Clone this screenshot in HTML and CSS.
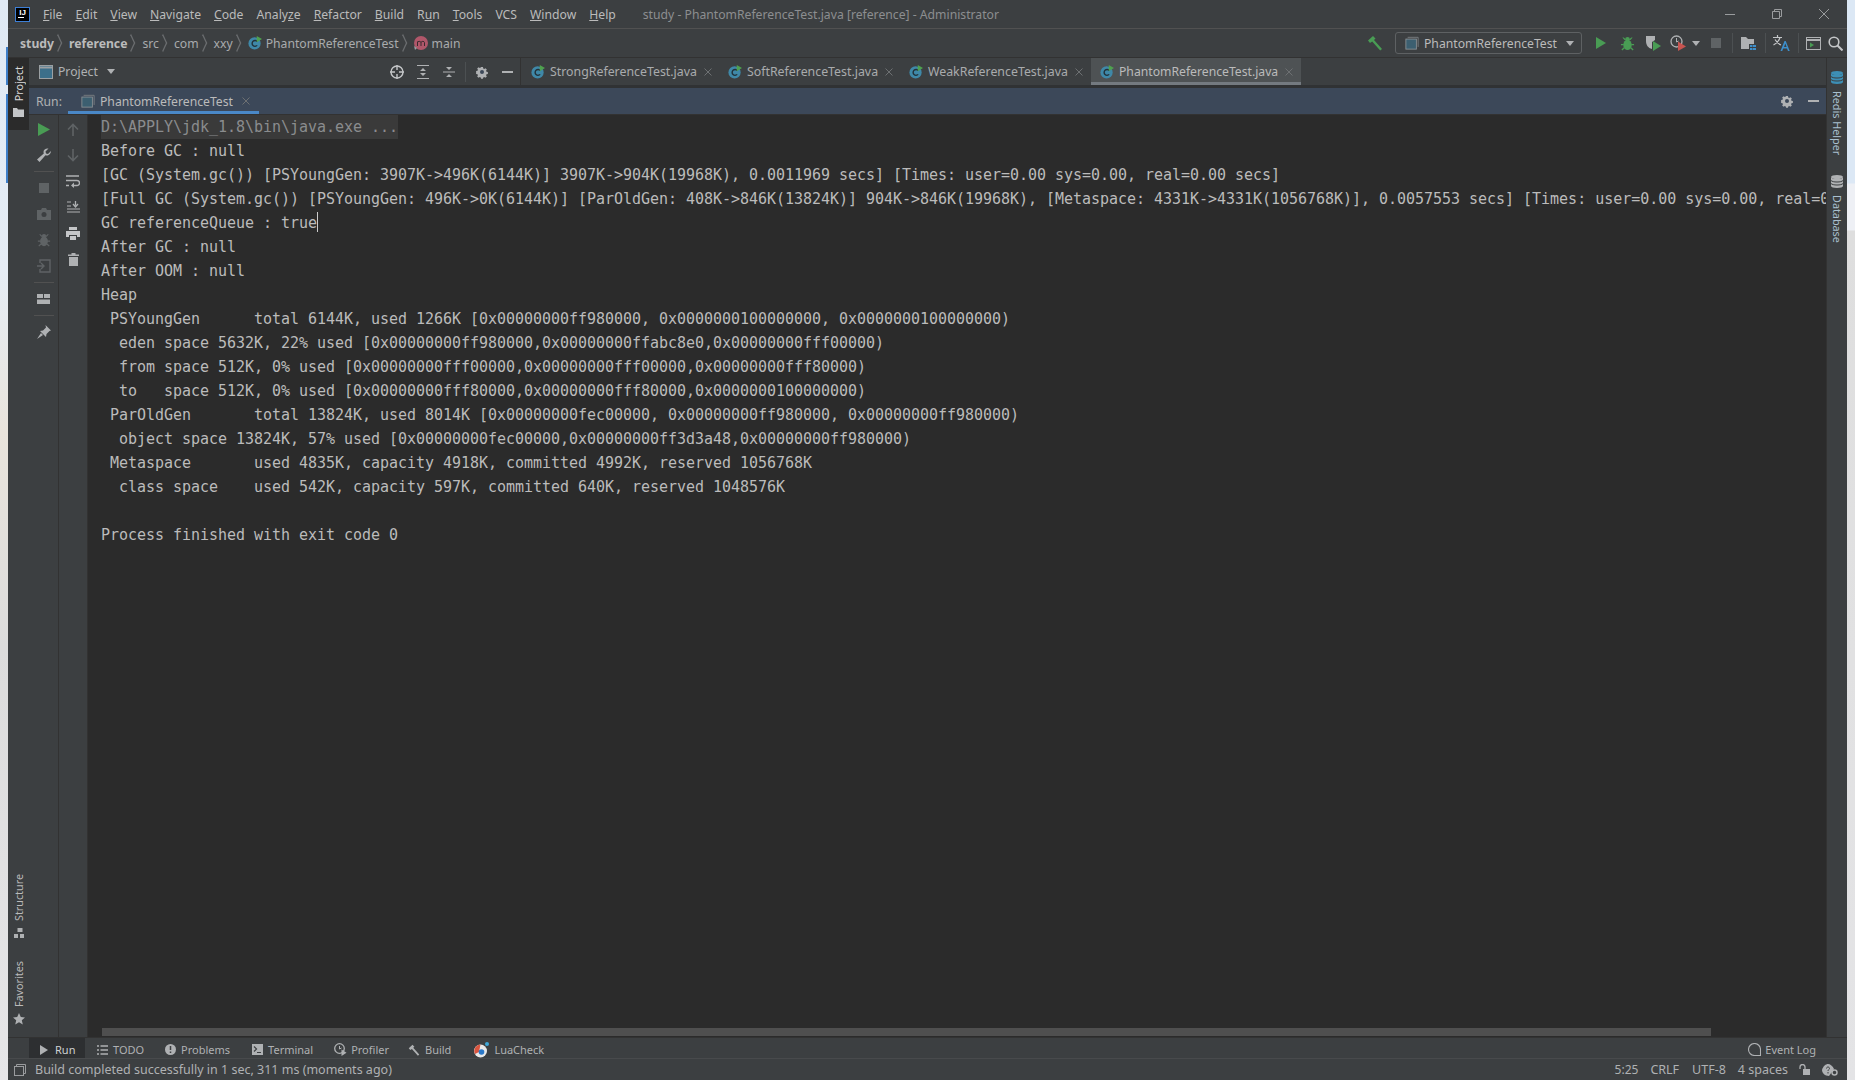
FILE: index.html
```html
<!DOCTYPE html>
<html lang="en">
<head>
    <meta charset="UTF-8">
    <meta name="viewport" content="width=device-width, initial-scale=1.0">
    <title>study - PhantomReferenceTest.java [reference] - Administrator</title>
    <link rel="stylesheet" href="styles.css">
</head>
<body>
    <!-- shared icons -->
    <svg class="sprite" xmlns="http://www.w3.org/2000/svg">
        <symbol id="i-class" viewBox="0 0 16 16">
            <circle cx="7.5" cy="8.5" r="7" fill="#3f88a8"/>
            <path d="M10.500 6.300A3.300 3.300 0 1 0 10.500 10.700" fill="none" stroke="#22323a" stroke-width="1.600"/>
            <path d="M10 0l6 3.5L10 7z" fill="#4fa14f"/>
        </symbol>
        <symbol id="i-panel" viewBox="0 0 16 16">
            <path d="M3 1.5h12v11" fill="none" stroke="#7b8083"/>
            <rect x="1" y="3.5" width="12" height="11.5" fill="#3c5f70" stroke="#8a9094"/>
        </symbol>
        <symbol id="i-gear" viewBox="0 0 16 16">
            <path d="M6.6 1h2.8l.4 2 1.4.6 1.7-1.1 2 2-1.1 1.7.6 1.4 2 .4v2.8l-2 .4-.6 1.4 1.1 1.7-2 2-1.7-1.1-1.4.6-.4 2H6.6l-.4-2-1.4-.6-1.7 1.1-2-2 1.1-1.7-.6-1.4-2-.4V6.600l2-.4.6-1.400-1.100-1.700 2-2 1.700 1.100 1.400-.6z" transform="translate(1.600 1.600) scale(.8)" fill="#afb1b3"/>
            <circle cx="8" cy="8" r="2.300" fill="#3c4859"/>
        </symbol>
        <symbol id="i-hammer" viewBox="0 0 16 16">
            <path d="M1 5.500L6 1l2.500 2.500-1.500 1.500 8 9-1.800 1.600-8-9L3 8z" fill="currentColor"/>
        </symbol>
        <symbol id="i-bug" viewBox="0 0 16 16">
            <g fill="currentColor">
                <ellipse cx="8" cy="9.500" rx="4.500" ry="5.500"/>
                <circle cx="8" cy="3.500" r="2.500"/>
                <path d="M2.500 1.500h1.500l2 2-1 1zM13.500 1.500H12l-2 2 1 1zM1 8.500h3v1.400H1zM12 8.500h3v1.400h-3zM1.500 14.500L4 12l1 1-2.500 2.500zM14.500 14.500L12 12l-1 1 2.500 2.500z"/>
            </g>
        </symbol>
        <symbol id="i-close" viewBox="0 0 8 8">
            <path d="M.5.5l7 7M7.500.5l-7 7" stroke="#6d7072" fill="none"/>
        </symbol>
    </svg>

    <div class="desktop">
        <div class="edge edge-left">
            <span class="edge-blue edge-blue-a"></span>
            <span class="edge-blue edge-blue-b"></span>
        </div>

        <div class="window">
            <header class="titlebar">
                <div class="app-logo">IJ</div>
                <nav class="menu">
                    <span><u>F</u>ile</span>
                    <span><u>E</u>dit</span>
                    <span><u>V</u>iew</span>
                    <span><u>N</u>avigate</span>
                    <span><u>C</u>ode</span>
                    <span>Analy<u>z</u>e</span>
                    <span><u>R</u>efactor</span>
                    <span><u>B</u>uild</span>
                    <span>R<u>u</u>n</span>
                    <span><u>T</u>ools</span>
                    <span>VCS</span>
                    <span><u>W</u>indow</span>
                    <span><u>H</u>elp</span>
                </nav>
                <div class="window-title">study - PhantomReferenceTest.java [reference] - Administrator</div>
                <div class="window-controls">
                    <svg width="10" height="10" viewBox="0 0 10 10"><path d="M0 5.500h10" stroke="#9a9c9e"/></svg>
                    <svg width="10" height="10" viewBox="0 0 10 10"><path d="M.5 2.500h7v7h-7zM2.500 2.500v-2h7v7h-2" fill="none" stroke="#9a9c9e"/></svg>
                    <svg width="10" height="10" viewBox="0 0 10 10"><path d="M0 0l10 10M10 0L0 10" stroke="#9a9c9e"/></svg>
                </div>
            </header>

            <div class="navbar">
                <div class="crumbs">
                    <b>study</b><i class="chev"></i>
                    <b>reference</b><i class="chev"></i>
                    <span>src</span><i class="chev"></i>
                    <span>com</span><i class="chev"></i>
                    <span>xxy</span><i class="chev"></i>
                    <svg class="ico14"><use href="#i-class"/></svg>
                    <span class="crumb-class">PhantomReferenceTest</span><i class="chev"></i>
                    <svg class="ico14" viewBox="0 0 14 14">
                        <circle cx="7" cy="7" r="7" fill="#b0576a"/>
                        <path d="M3.500 10V5.500M3.500 6.500c0-1.500 3.500-1.500 3.500 0V10M7 6.500c0-1.500 3.500-1.500 3.500 0V10" fill="none" stroke="#3a2a2e"/>
                        <path d="M0 10l3 2-2 2z" fill="#9aa0a3"/>
                    </svg>
                    <span class="crumb-class">main</span>
                </div>
                <div class="actions">
                    <svg class="hammer" width="16" height="16"><use href="#i-hammer"/></svg>
                    <div class="run-combo">
                        <svg class="ico14"><use href="#i-panel"/></svg>
                        <span>PhantomReferenceTest</span>
                        <i class="caret-down"></i>
                    </div>
                    <svg class="act-run" width="12" height="14" viewBox="0 0 12 14"><path d="M1 1l10 6-10 6z" fill="#499c54"/></svg>
                    <svg class="act-bug" width="15" height="15"><use href="#i-bug"/></svg>
                    <svg class="act-cov" width="16" height="16" viewBox="0 0 16 16">
                        <path d="M1 1h9v4l-3 2v7C3 13 1 10 1 6z" fill="#afb1b3"/>
                        <path d="M8 6l8 5-8 5z" fill="#499c54"/>
                    </svg>
                    <svg class="act-prof" width="16" height="16" viewBox="0 0 16 16">
                        <circle cx="6.500" cy="6.500" r="5.500" fill="none" stroke="#afb1b3" stroke-width="1.300"/>
                        <path d="M6.500 3v4l2-1" fill="none" stroke="#afb1b3"/>
                        <path d="M8 6.500l8 5-8 4.500z" fill="#c75450"/>
                    </svg>
                    <i class="caret-down act-caret"></i>
                    <span class="act-stop"></span>
                    <i class="act-sep"></i>
                    <svg class="act-folder" width="15" height="14" viewBox="0 0 15 14">
                        <path d="M0 1h5l2 2h6v5H8v5H0z" fill="#afb1b3"/>
                        <path d="M9 9h2.500v2H9zM12 9h3v2h-3zM9 12h2.500v2H9zM12 12h3v2h-3z" fill="#3d8fcb"/>
                    </svg>
                    <i class="act-sep"></i>
                    <svg class="act-trans" width="17" height="16" viewBox="0 0 17 16">
                        <path d="M0 2.500h9M4.500 0v2.500M7 2.500C6 6 3.500 8.500.5 10M2 4.500C3.500 7 5.500 9 8 10" fill="none" stroke="#c4c6c8" stroke-width="1.200"/>
                        <path d="M7.500 16l4-10h1.200l4 10h-1.700l-1-2.600h-3.800l-1 2.600zM11 12h2.600l-1.300-3.500z" fill="#3d8fcb"/>
                    </svg>
                    <i class="act-sep"></i>
                    <svg class="act-win" width="15" height="13" viewBox="0 0 15 13">
                        <rect x=".5" y=".5" width="14" height="12" fill="none" stroke="#afb1b3"/>
                        <path d="M.5 3h14" stroke="#afb1b3" stroke-width="2"/>
                        <path d="M4 5.500l4 2.500-4 2.500z" fill="#499c54"/>
                    </svg>
                    <svg class="act-search" width="15" height="15" viewBox="0 0 15 15">
                        <circle cx="6" cy="6" r="4.800" fill="none" stroke="#c4c6c8" stroke-width="1.600"/>
                        <path d="M9.500 9.500l5 5" stroke="#c4c6c8" stroke-width="2"/>
                    </svg>
                </div>
            </div>

            <div class="workspace">
                <aside class="strip strip-left">
                    <div class="strip-btn strip-active">
                        <span class="vtext">Project</span>
                        <svg width="11" height="9" viewBox="0 0 11 9"><path d="M0 0h4l1 1.500h6V9H0z" fill="#c4c6c8"/></svg>
                    </div>
                    <div class="strip-bottom">
                        <div class="strip-btn">
                            <span class="vtext">Structure</span>
                            <svg width="10" height="10" viewBox="0 0 10 10"><path d="M3.500 0h5v4h-5zM0 6h4v4H0zM6 6h4v4H6z" fill="#afb1b3"/></svg>
                        </div>
                        <div class="strip-btn strip-fav">
                            <span class="vtext">Favorites</span>
                            <svg width="12" height="12" viewBox="0 0 12 12"><path d="M6 0l1.800 4 4.200.4-3.200 2.800 1 4.300L6 9.200l-3.800 2.300 1-4.300L0 4.400 4.200 4z" fill="#afb1b3"/></svg>
                        </div>
                    </div>
                </aside>

                <main class="center">
                    <div class="tabs-row">
                        <div class="project-head">
                            <svg class="ico14" viewBox="0 0 14 14"><rect x=".5" y=".5" width="13" height="13" fill="#3c6f8a" stroke="#9ba0a3"/><path d="M.5 2.500h13" stroke="#9ba0a3" stroke-width="2"/></svg>
                            <span class="project-label">Project</span>
                            <i class="caret-down"></i>
                            <svg class="head-target" width="14" height="14" viewBox="0 0 14 14">
                                <circle cx="7" cy="7" r="6" fill="none" stroke="#c4c6c8" stroke-width="1.400"/>
                                <path d="M7 0v5M7 9v5M0 7h5M9 7h5" stroke="#c4c6c8" stroke-width="1.400"/>
                            </svg>
                            <svg class="head-expand" width="12" height="14" viewBox="0 0 12 14">
                                <path d="M0 .5h12M0 13.500h12" stroke="#afb1b3"/>
                                <path d="M6 3L3 6h6zM6 11L3 8h6z" fill="#afb1b3"/>
                            </svg>
                            <svg class="head-collapse" width="12" height="14" viewBox="0 0 12 14">
                                <path d="M0 7h12" stroke="#afb1b3"/>
                                <path d="M6 5L3 2h6zM6 9l-3 3h6z" fill="#afb1b3"/>
                            </svg>
                            <i class="head-sep"></i>
                            <svg class="head-gear" width="14" height="14"><use href="#i-gear"/></svg>
                            <i class="head-minus"></i>
                        </div>
                        <div class="tab tab-strong">
                            <svg class="ico14"><use href="#i-class"/></svg>
                            <span>StrongReferenceTest.java</span>
                            <svg class="close" width="8" height="8"><use href="#i-close"/></svg>
                        </div>
                        <div class="tab tab-soft">
                            <svg class="ico14"><use href="#i-class"/></svg>
                            <span>SoftReferenceTest.java</span>
                            <svg class="close" width="8" height="8"><use href="#i-close"/></svg>
                        </div>
                        <div class="tab tab-weak">
                            <svg class="ico14"><use href="#i-class"/></svg>
                            <span>WeakReferenceTest.java</span>
                            <svg class="close" width="8" height="8"><use href="#i-close"/></svg>
                        </div>
                        <div class="tab tab-active">
                            <svg class="ico14"><use href="#i-class"/></svg>
                            <span>PhantomReferenceTest.java</span>
                            <svg class="close" width="8" height="8"><use href="#i-close"/></svg>
                        </div>
                    </div>

                    <div class="run-head">
                        <span class="run-label">Run:</span>
                        <div class="run-tab">
                            <svg class="ico14"><use href="#i-panel"/></svg>
                            <span>PhantomReferenceTest</span>
                            <svg class="close" width="8" height="8"><use href="#i-close"/></svg>
                        </div>
                        <div class="run-head-right">
                            <svg width="14" height="14"><use href="#i-gear"/></svg>
                            <i class="head-minus"></i>
                        </div>
                    </div>

                    <div class="run-body">
                        <div class="run-tools run-tools-main">
                            <div class="tool"><svg width="12" height="13" viewBox="0 0 12 13"><path d="M0 0l12 6.500L0 13z" fill="#499c54"/></svg></div>
                            <div class="tool"><svg width="14" height="14" viewBox="0 0 14 14"><path d="M14 3l-3 3-2-.5-.5-2 3-3C9 0 6.500 1.500 6.500 4c0 .7.1 1 .3 1.500L0 11.500 2.500 14l6-6.800c.5.200 1 .3 1.500.3 2.500 0 4-2.500 4-4.500z" fill="#afb1b3"/></svg></div>
                            <i class="tool-sep"></i>
                            <div class="tool"><span class="tool-stop"></span></div>
                            <div class="tool"><svg width="14" height="12" viewBox="0 0 14 12"><path d="M0 2h4l1-2h4l1 2h4v10H0z" fill="#5f6365"/><circle cx="7" cy="6.500" r="2.500" fill="#3c3f41"/></svg></div>
                            <div class="tool dim-bug"><svg width="14" height="14"><use href="#i-bug"/></svg></div>
                            <div class="tool"><svg width="14" height="14" viewBox="0 0 14 14"><path d="M3 4V1h10v12H3v-3" fill="none" stroke="#5f6365" stroke-width="1.400"/><path d="M0 7h6M4 4l3 3-3 3" fill="none" stroke="#5f6365" stroke-width="1.400"/></svg></div>
                            <i class="tool-sep"></i>
                            <div class="tool"><svg width="13" height="10" viewBox="0 0 13 10"><path d="M0 0h6v4H0zM7 0h6v4H7zM0 5.500h13V10H0z" fill="#afb1b3"/></svg></div>
                            <i class="tool-sep"></i>
                            <div class="tool"><svg width="14" height="14" viewBox="0 0 14 14"><path d="M8.500 0L14 5.500l-1.500.5-3 3-.5 3-6-6 3-.5 3-3zM4 8l2 2-6 4z" fill="#afb1b3"/></svg></div>
                        </div>
                        <div class="run-tools">
                            <div class="tool"><svg width="12" height="13" viewBox="0 0 12 13"><path d="M6 13V2M1 6.500L6 1.500l5 5" fill="none" stroke="#5f6365" stroke-width="1.600"/></svg></div>
                            <div class="tool"><svg width="12" height="13" viewBox="0 0 12 13"><path d="M6 0v11M1 6.500l5 5 5-5" fill="none" stroke="#5f6365" stroke-width="1.600"/></svg></div>
                            <div class="tool"><svg width="14" height="13" viewBox="0 0 14 13"><path d="M0 1h13M0 5.500h11a2.500 2.500 0 0 1 0 5H6M0 10.500h3" fill="none" stroke="#afb1b3" stroke-width="1.400"/><path d="M8 7.500l-3 3 3 2.500z" fill="#afb1b3"/></svg></div>
                            <div class="tool"><svg width="13" height="12" viewBox="0 0 13 12"><path d="M0 1h4M0 5h4M0 8h13M0 11h13" stroke="#afb1b3" stroke-width="1.200"/><path d="M8.500 0v4.500M6 3l2.500 3L11 3" fill="none" stroke="#afb1b3" stroke-width="1.300"/></svg></div>
                            <div class="tool"><svg width="14" height="13" viewBox="0 0 14 13"><path d="M3 0h8v3H3zM0 4h14v6h-3V8H3v2H0zM4 9h6v4H4z" fill="#c4c6c8"/></svg></div>
                            <div class="tool"><svg width="11" height="13" viewBox="0 0 11 13"><path d="M3.500 0h4v1.500H11V3H0V1.500h3.500zM1 4h9v9H1z" fill="#afb1b3"/></svg></div>
                        </div>
                        <div class="console">
                            <pre class="output"><span class="cmd-line">D:\APPLY\jdk_1.8\bin\java.exe ...</span>
Before GC : null
[GC (System.gc()) [PSYoungGen: 3907K-&gt;496K(6144K)] 3907K-&gt;904K(19968K), 0.0011969 secs] [Times: user=0.00 sys=0.00, real=0.00 secs] 
[Full GC (System.gc()) [PSYoungGen: 496K-&gt;0K(6144K)] [ParOldGen: 408K-&gt;846K(13824K)] 904K-&gt;846K(19968K), [Metaspace: 4331K-&gt;4331K(1056768K)], 0.0057553 secs] [Times: user=0.00 sys=0.00, real=0.01 secs] 
GC referenceQueue : true<span class="text-caret"></span>
After GC : null
After OOM : null
Heap
 PSYoungGen      total 6144K, used 1266K [0x00000000ff980000, 0x0000000100000000, 0x0000000100000000)
  eden space 5632K, 22% used [0x00000000ff980000,0x00000000ffabc8e0,0x00000000fff00000)
  from space 512K, 0% used [0x00000000fff00000,0x00000000fff00000,0x00000000fff80000)
  to   space 512K, 0% used [0x00000000fff80000,0x00000000fff80000,0x0000000100000000)
 ParOldGen       total 13824K, used 8014K [0x00000000fec00000, 0x00000000ff980000, 0x00000000ff980000)
  object space 13824K, 57% used [0x00000000fec00000,0x00000000ff3d3a48,0x00000000ff980000)
 Metaspace       used 4835K, capacity 4918K, committed 4992K, reserved 1056768K
  class space    used 542K, capacity 597K, committed 640K, reserved 1048576K

Process finished with exit code 0</pre>
                            <div class="hscroll"></div>
                        </div>
                    </div>
                </main>

                <aside class="strip strip-right">
                    <div class="strip-btn">
                        <svg width="12" height="13" viewBox="0 0 12 13"><ellipse cx="6" cy="2" rx="6" ry="2" fill="#3d8fb5"/><path d="M0 2v9c0 1 2.500 2 6 2s6-1 6-2V2c0 1-2.500 2-6 2S0 3 0 2z" fill="#3d8fb5"/><path d="M0 5.500c1 1 3 1.500 6 1.500s5-.5 6-1.500M0 8.500c1 1 3 1.500 6 1.500s5-.5 6-1.500" fill="none" stroke="#3c3f41"/></svg>
                        <span class="vtext vtext-down">Redis Helper</span>
                    </div>
                    <div class="strip-btn strip-db">
                        <svg width="12" height="13" viewBox="0 0 12 13"><ellipse cx="6" cy="2" rx="6" ry="2" fill="#afb1b3"/><path d="M0 2v9c0 1 2.500 2 6 2s6-1 6-2V2c0 1-2.500 2-6 2S0 3 0 2z" fill="#afb1b3"/><path d="M0 5.500c1 1 3 1.500 6 1.500s5-.5 6-1.500M0 8.500c1 1 3 1.500 6 1.500s5-.5 6-1.500" fill="none" stroke="#3c3f41"/></svg>
                        <span class="vtext vtext-down">Database</span>
                    </div>
                </aside>
            </div>

            <div class="toolbar">
                <div class="tw tw-run">
                    <svg width="8" height="10" viewBox="0 0 8 10"><path d="M0 0l8 5-8 5z" fill="#afb1b3"/></svg>
                    <span>Run</span>
                </div>
                <div class="tw tw-todo">
                    <svg width="11" height="10" viewBox="0 0 11 10"><path d="M0 1h2M3.500 1H11M0 5h2M3.500 5H11M0 9h2M3.500 9H11" stroke="#afb1b3" stroke-width="1.600"/></svg>
                    <span>TODO</span>
                </div>
                <div class="tw tw-problems">
                    <svg width="11" height="11" viewBox="0 0 11 11"><circle cx="5.500" cy="5.500" r="5.500" fill="#afb1b3"/><path d="M5.500 2v4M5.500 7.500v1.500" stroke="#3c3f41" stroke-width="1.500"/></svg>
                    <span>Problems</span>
                </div>
                <div class="tw">
                    <svg width="11" height="11" viewBox="0 0 11 11"><rect width="11" height="11" fill="#afb1b3"/><path d="M2 2.500l2.500 2.500L2 7.500M5 8.500h4" fill="none" stroke="#3c3f41" stroke-width="1.200"/></svg>
                    <span>Terminal</span>
                </div>
                <div class="tw tw-profiler">
                    <svg width="13" height="13" viewBox="0 0 13 13"><circle cx="5.500" cy="5.500" r="4.800" fill="none" stroke="#afb1b3" stroke-width="1.300"/><path d="M5.500 3v3l2-1" fill="none" stroke="#afb1b3"/><path d="M7.500 6.500l5 3.200-5 3.300z" fill="#afb1b3"/></svg>
                    <span>Profiler</span>
                </div>
                <div class="tw tw-build">
                    <svg width="12" height="12"><use href="#i-hammer"/></svg>
                    <span>Build</span>
                </div>
                <div class="tw">
                    <svg width="16" height="16" viewBox="0 0 16 16">
                        <circle cx="7.500" cy="9" r="6.500" fill="#e8e8e8"/>
                        <path d="M7.500 2.500A6.500 6.500 0 0 0 2 12l4-2z" fill="#d9553f"/>
                        <circle cx="8.500" cy="10" r="2.800" fill="#2a78c8"/>
                        <circle cx="14" cy="2" r="2" fill="#3fa7d6"/>
                    </svg>
                    <span>LuaCheck</span>
                </div>
                <div class="tw tw-event">
                    <svg width="13" height="13" viewBox="0 0 13 13"><path d="M12.500 12.500H6.500a6 6 0 1 1 6-6z" fill="none" stroke="#afb1b3" stroke-width="1.100"/></svg>
                    <span>Event Log</span>
                </div>
            </div>

            <footer class="statusbar">
                <svg width="12" height="12" viewBox="0 0 12 12"><path d="M2.500 2.500v-2h9v9h-2" fill="none" stroke="#9a9c9e"/><rect x=".5" y="2.500" width="9" height="9" fill="none" stroke="#9a9c9e"/></svg>
                <span class="status-msg">Build completed successfully in 1 sec, 311 ms (moments ago)</span>
                <div class="status-right">
                    <span class="st-pos">5:25</span>
                    <span class="st-eol">CRLF</span>
                    <span class="st-enc">UTF-8</span>
                    <span class="st-ind">4 spaces</span>
                    <svg class="st-lock" width="11" height="11" viewBox="0 0 11 11"><path d="M1 5V3a2.500 2.500 0 0 1 5 0v2" fill="none" stroke="#afb1b3" stroke-width="1.300"/><rect x="4" y="5" width="7" height="6" fill="#afb1b3"/></svg>
                    <svg class="st-hector" width="16" height="12" viewBox="0 0 16 12"><path d="M0 6c1-4 4-6 6-6s5 2 6 5l-5 7C3 12 0 9 0 6z" fill="#afb1b3"/><path d="M4.500 4.500c0-2 3-2 3 0 0 1-1.500 1-1.500 2.500M6 8v1.500" fill="none" stroke="#3c3f41"/><circle cx="12.500" cy="8.500" r="2.500" fill="none" stroke="#afb1b3" stroke-width="1.500"/></svg>
                </div>
            </footer>
        </div>

        <div class="edge edge-right"></div>
    </div>
</body>
</html>
```

FILE: styles.css
```css
* {
    box-sizing: border-box;
}
html, body {
    margin: 0;
    height: 100%;
    overflow: hidden;
}
body {
    font-family: "Noto Sans", Arial, sans-serif;
    font-size: 12.2px;
    color: #afb1b3;
    background-color: #3c3f41;
}
i {
    font-style: normal;
}
svg {
    flex: none;
    display: block;
}
.sprite {
    display: none;
}
.ico14 {
    width: 14px;
    height: 14px;
    flex: none;
}
.desktop {
    display: flex;
    height: 1080px;
}

/* bits of desktop visible around the window */
.edge {
    width: 8px;
    flex: none;
    position: relative;
}
.edge-left {
    background: linear-gradient(to bottom, #dfe9f4 0, #e6edf5 25%, #e9e4dc 40%, #dcdcdc 60%, #e6e6e8 100%);
}
.edge-right {
    background: linear-gradient(to bottom, #dce8f5 0, #dce8f5 183px, #eef0f5 184px, #eef0f5 230px, #dedede 231px, #e4e4e6 100%);
}
.edge-blue {
    position: absolute;
    left: 6px;
    width: 2px;
    background-color: #3f7fc8;
}
.edge-blue-a {
    top: 47px;
    height: 38px;
}
.edge-blue-b {
    top: 94px;
    height: 89px;
}
.window {
    flex: 1;
    min-width: 0;
    display: flex;
    flex-direction: column;
}

/* title bar */
.titlebar {
    height: 29px;
    flex: none;
    display: flex;
    align-items: center;
    border-bottom: 1px solid #515151;
}
.app-logo {
    width: 15px;
    height: 15px;
    margin-left: 7px;
    background-color: #000;
    border: 1px solid #3d7fd6;
    color: #fff;
    font: bold 8px/9px "Liberation Sans", sans-serif;
    text-align: center;
}
.app-logo::after {
    content: "";
    display: block;
    width: 6px;
    height: 1px;
    margin: 0 0 0 2px;
    background-color: #fff;
}
.menu {
    display: flex;
    gap: 13px;
    margin-left: 13px;
    color: #bbbbbb;
}
.window-title {
    margin-left: 27px;
    color: #8c8e90;
}
.window-controls {
    margin-left: auto;
    display: flex;
    gap: 37px;
    margin-right: 18px;
    align-items: center;
}

/* breadcrumb + run toolbar */
.navbar {
    height: 29px;
    flex: none;
    display: flex;
    align-items: center;
    justify-content: space-between;
    border-bottom: 1px solid #323232;
}
.crumbs {
    display: flex;
    align-items: center;
    margin-left: 12px;
    color: #a9abad;
}
.crumbs b {
    color: #bbbbbb;
}
.chev {
    width: 6px;
    height: 6px;
    margin: 0 8px 0 1px;
    border-top: 1px solid #6a6d6f;
    border-right: 1px solid #6a6d6f;
    transform: scaleY(2.2) rotate(45deg);
}
.crumb-class {
    margin-left: 4px;
}
.actions {
    display: flex;
    align-items: center;
    margin-right: 4px;
}
.hammer {
    color: #499c54;
}
.run-combo {
    width: 187px;
    height: 22px;
    margin-left: 12px;
    display: flex;
    align-items: center;
    gap: 5px;
    padding-left: 9px;
    border: 1px solid #5e6163;
    border-radius: 3px;
    color: #bbbbbb;
}
.caret-down {
    display: block;
    width: 0;
    height: 0;
    flex: none;
    border-left: 4px solid transparent;
    border-right: 4px solid transparent;
    border-top: 5px solid #afb1b3;
}
.run-combo .caret-down {
    margin-left: 4px;
}
.act-run {
    margin-left: 13px;
}
.act-bug {
    color: #499c54;
    margin-left: 13px;
}
.act-cov {
    margin-left: 10px;
}
.act-prof {
    margin-left: 9px;
}
.act-caret {
    margin-left: 6px;
}
.act-stop {
    width: 10px;
    height: 10px;
    background-color: #5f6365;
    margin-left: 11px;
}
.act-sep {
    width: 1px;
    height: 20px;
    background-color: #4c5052;
    margin-left: 11px;
}
.act-folder {
    margin-left: 8px;
}
.act-folder + .act-sep {
    margin-left: 9px;
}
.act-trans {
    margin-left: 7px;
}
.act-trans + .act-sep {
    margin-left: 8px;
}
.act-win, .act-search {
    margin-left: 7px;
}

/* tool window strips */
.workspace {
    flex: 1;
    min-height: 0;
    display: flex;
}
.strip {
    width: 21px;
    flex: none;
    display: flex;
    flex-direction: column;
    align-items: center;
}
.strip-left {
    justify-content: space-between;
    padding-bottom: 12px;
    color: #bbbbbb;
}
.strip-btn {
    display: flex;
    flex-direction: column;
    align-items: center;
    gap: 7px;
}
.strip-active {
    width: 100%;
    height: 72px;
    padding-top: 8px;
    background-color: #2b2b2b;
    color: #dcdcdc;
}
.strip-bottom {
    display: flex;
    flex-direction: column;
    gap: 23px;
}
.strip-fav {
    gap: 6px;
}
.vtext {
    writing-mode: vertical-rl;
    transform: rotate(180deg);
    font-size: 10.8px;
    line-height: 14px;
}
.vtext-down {
    transform: none;
    color: #a9c0cf;
}
.strip-right {
    padding-top: 13px;
    border-left: 1px solid #323232;
}
.strip-db {
    margin-top: 20px;
}

/* editor tabs row */
.center {
    flex: 1;
    min-width: 0;
    display: flex;
    flex-direction: column;
}
.tabs-row {
    height: 30px;
    flex: none;
    display: flex;
    border-bottom: 3px solid #303234;
}
.project-head {
    width: 492px;
    flex: none;
    display: flex;
    align-items: center;
    padding-left: 10px;
    border-right: 1px solid #323232;
}
.project-label {
    margin-left: 5px;
    margin-right: 9px;
}
.head-target {
    margin-left: 275px;
}
.head-expand {
    margin-left: 13px;
}
.head-collapse {
    margin-left: 14px;
}
.head-sep {
    width: 1px;
    height: 20px;
    background-color: #4c5052;
    margin-left: 10px;
}
.head-gear {
    margin-left: 9px;
}
.head-minus {
    display: block;
    width: 11px;
    height: 2px;
    background-color: #afb1b3;
    margin-left: 13px;
}
.tab {
    display: flex;
    align-items: center;
    padding-left: 12px;
    font-size: 12.35px;
    color: #a9abad;
}
.tab span {
    margin-left: 5px;
}
.tab-strong {
    width: 195px;
    padding-left: 10px;
}
.tab-soft {
    width: 181px;
}
.tab-weak {
    width: 194px;
}
.tab-active {
    width: 210px;
    padding-left: 9px;
    padding-top: 3px;
    font-size: 12.2px;
    background-color: #4e5254;
    border-bottom: 3px solid #747a80;
    color: #bbbbbb;
}
.close {
    margin-left: 7px;
}

/* run tool window */
.run-head {
    height: 27px;
    flex: none;
    display: flex;
    align-items: stretch;
    background-color: #3c4859;
    border-bottom: 1px solid #323232;
}
.run-label {
    align-self: center;
    margin-left: 7px;
    width: 32px;
}
.run-tab {
    display: flex;
    align-items: center;
    gap: 5px;
    width: 191px;
    padding-left: 13px;
    padding-top: 3px;
    border-bottom: 3px solid #4a88c7;
    color: #bbbbbb;
}
.run-tab .close {
    margin-left: 4px;
}
.run-head-right {
    margin-left: auto;
    margin-right: 7px;
    display: flex;
    align-items: center;
}
.run-head-right .head-minus {
    margin-left: 14px;
}
.run-body {
    flex: 1;
    min-height: 0;
    display: flex;
}
.run-tools {
    width: 29px;
    flex: none;
    padding-top: 1px;
    display: flex;
    flex-direction: column;
    align-items: center;
    border-right: 1px solid #323232;
}
.run-tools-main {
    width: 30px;
}
.tool {
    height: 26px;
    flex: none;
    display: flex;
    align-items: center;
    justify-content: center;
}
.tool-sep {
    width: 20px;
    height: 7px;
    flex: none;
    background: linear-gradient(#515151, #515151) center / 100% 1px no-repeat;
}
.tool-stop {
    display: block;
    width: 10px;
    height: 10px;
    background-color: #5f6365;
}
.dim-bug {
    color: #5f6365;
}

/* console output */
.console {
    flex: 1;
    min-width: 0;
    position: relative;
    background-color: #2b2b2b;
    overflow: hidden;
}
.output {
    margin: 0 0 0 13px;
    font-family: "DejaVu Sans Mono", monospace;
    font-size: 15px;
    letter-spacing: -0.03px;
    line-height: 24px;
    color: #bbbbbb;
}
.cmd-line {
    display: inline-block;
    background-color: #3a3a3a;
    color: #8a8c8e;
}
.text-caret {
    display: inline-block;
    width: 0;
    height: 20px;
    vertical-align: -4px;
    border-left: 1px solid #cccccc;
}
.hscroll {
    position: absolute;
    left: 14px;
    right: 115px;
    bottom: 1px;
    height: 8px;
    background-color: #4f4f4f;
}

/* bottom tool buttons */
.toolbar {
    height: 22px;
    flex: none;
    display: flex;
    align-items: stretch;
    font-size: 11px;
    border-top: 1px solid #323232;
    border-bottom: 1px solid #484a4c;
}
.tw {
    display: flex;
    align-items: center;
    gap: 5px;
    margin-left: 22px;
    padding-top: 3px;
}
.tw-run {
    width: 56px;
    margin-left: 21px;
    padding-left: 11px;
    gap: 7px;
    background-color: #2d2f31;
    color: #cfd1d3;
}
.tw-todo {
    margin-left: 12px;
}
.tw-problems {
    margin-left: 21px;
}
.tw-profiler {
    margin-left: 21px;
    gap: 4px;
}
.tw-build {
    margin-left: 19px;
}
.tw-event {
    margin-left: auto;
    margin-right: 31px;
    gap: 4px;
}

/* status bar */
.statusbar {
    height: 21px;
    flex: none;
    display: flex;
    align-items: center;
    padding-left: 6px;
    font-size: 12.5px;
}
.status-msg {
    margin-left: 9px;
}
.status-right {
    margin-left: auto;
    margin-right: 9px;
    display: flex;
    align-items: center;
}
.st-pos {
    font-size: 12px;
}
.st-eol {
    margin-left: 12px;
}
.st-enc {
    margin-left: 13px;
}
.st-ind {
    margin-left: 12px;
}
.st-lock {
    margin-left: 11px;
}
.st-hector {
    margin-left: 12px;
}
```
